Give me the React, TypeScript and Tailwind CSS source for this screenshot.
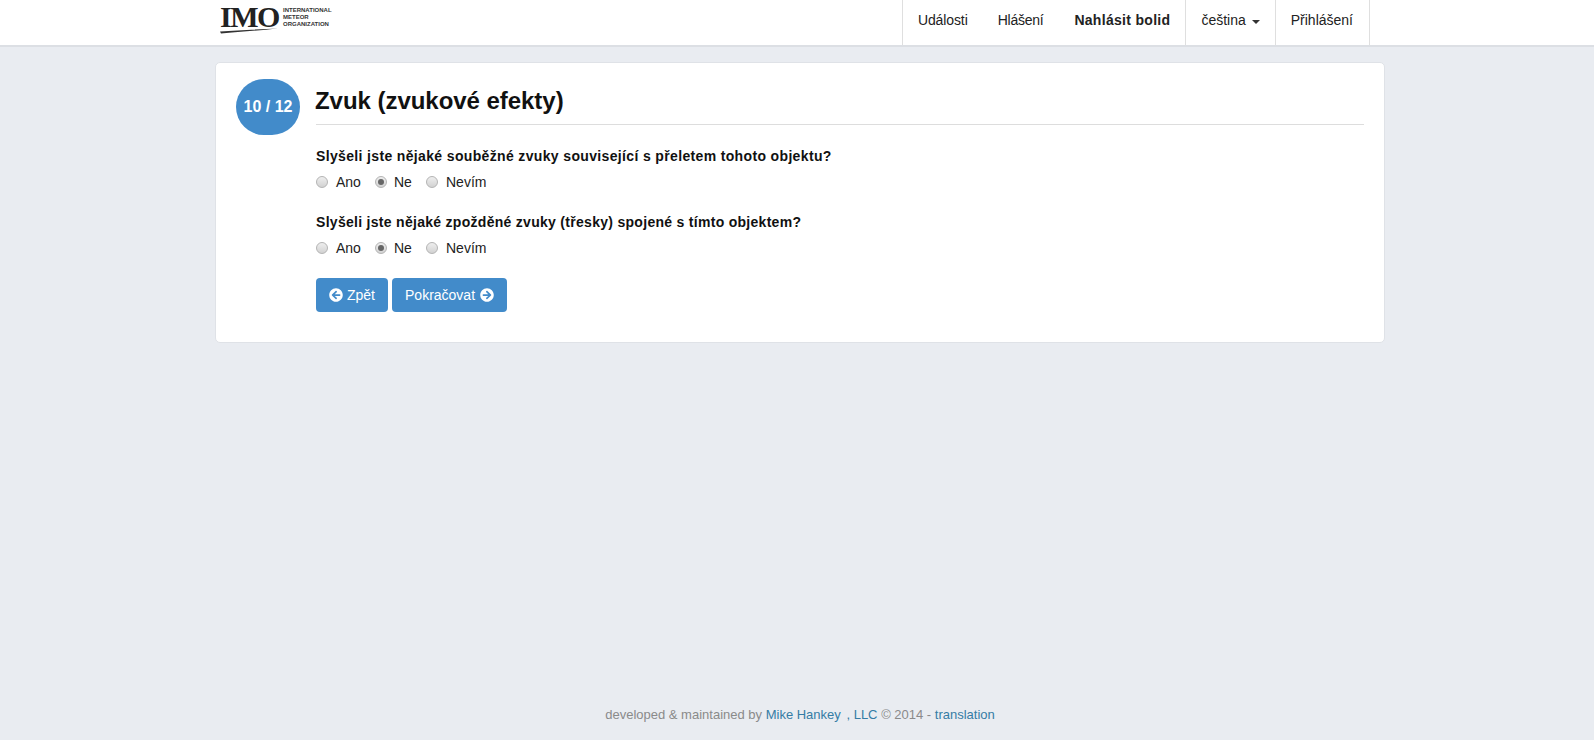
import { FaArrowCircleLeft, FaArrowCircleRight } from "react-icons/fa";

const font = "font-['Liberation_Sans',Arial,sans-serif]";

function Radio({ label, checked }: { label: string; checked?: boolean }) {
  return (
    <label className="flex items-center">
      <span className="flex h-[12px] w-[12px] items-center justify-center rounded-full border border-[#b4b4b4] bg-[linear-gradient(#eeeeee,#d2d2d2)]">
        {checked ? <span className="h-[6px] w-[6px] rounded-full bg-[#666666]" /> : null}
      </span>
      <span className={checked ? "ml-[7px]" : "ml-[8px]"}>{label}</span>
    </label>
  );
}

function Question({ title, tight }: { title: string; tight?: boolean }) {
  return (
    <div className="mb-[21px]">
      <p className={`text-[14px] leading-[18px] font-bold text-[#111111] ${tight ? "tracking-[0.29px]" : "tracking-[0.35px]"}`}>{title}</p>
      <div className="mt-[7px] flex h-[20px] items-center text-[14px] text-[#222222]">
        <div className="w-[59px]"><Radio label="Ano" /></div>
        <div className="w-[51px]"><Radio label="Ne" checked /></div>
        <Radio label="Nevím" />
      </div>
    </div>
  );
}

export default function App() {
  return (
    <div className={`flex h-[740px] flex-col bg-[#e9ecf1] ${font} text-[14px]`}>
      <header className="h-[47px] shrink-0 border-b-2 border-[#dcdfe4] bg-white">
        <div className="mx-auto flex h-[45px] w-[1170px] items-start justify-between pr-[12px] pl-[8px]">
          <div className="flex h-[34px] items-center">
            <div className="relative mr-[5px] h-[34px] w-[58px]">
              <span className="block -translate-y-[1px] font-['Liberation_Serif',serif] text-[30px] leading-[36px] font-bold tracking-[-1.5px] text-[#222222]">IMO</span>
              <svg className="absolute top-[27px] left-0 h-[7px] w-[58px]" viewBox="0 0 58 7">
                <path d="M0 4.5 C 18 3.5 40 2 58 1.5 C 40 3.5 18 5 1 6.5 Z" fill="#333333" />
              </svg>
            </div>
            <div className="text-[6px] leading-[7px] font-bold text-[#333333]">
              <div>INTERNATIONAL</div>
              <div>METEOR</div>
              <div>ORGANIZATION</div>
            </div>
          </div>
          <nav className="flex h-[45px] items-stretch border-x border-[#dfdfdf] text-[#222222]">
            <a className="flex items-center px-[15px] pb-[4px] tracking-[-0.1px]">Události</a>
            <a className="flex items-center px-[15px] pb-[4px] tracking-[-0.25px]">Hlášení</a>
            <a className="flex items-center pr-[15px] pb-[4px] pl-[16px] font-bold tracking-[0.3px]">Nahlásit bolid</a>
            <a className="flex items-center gap-[6px] border-l border-[#dfdfdf] px-[15px] pb-[4px]">
              čeština
              <span className="mt-[2px] h-0 w-0 border-x-[4px] border-t-[4px] border-x-transparent border-t-[#333333]" />
            </a>
            <a className="flex items-center border-l border-[#dfdfdf] pr-[16px] pb-[4px] pl-[15px]">Přihlášení</a>
          </nav>
        </div>
      </header>

      <main className="mx-auto mt-[15px] flex h-[281px] w-[1170px] translate-x-[3px] rounded-[5px] border border-[#dfe2e7] bg-white pt-[16px] pr-[20px] pl-[20px]">
        <div className="flex h-[56px] w-[64px] shrink-0 items-center justify-center rounded-[28px] bg-[#428bca] text-[16px] font-bold text-white">
          10 / 12
        </div>
        <div className="ml-[16px] flex-1">
          <h1 className="h-[46px] border-b border-[#dddddd] text-[24px] leading-[44px] font-bold tracking-[-0.04px] text-[#111111]">
            <span className="-ml-[1px] block">Zvuk (zvukové efekty)</span>
          </h1>
          <div className="mt-[22px]">
            <Question title="Slyšeli jste nějaké souběžné zvuky související s přeletem tohoto objektu?" />
            <Question title="Slyšeli jste nějaké zpožděné zvuky (třesky) spojené s tímto objektem?" tight />
          </div>
          <div className="mt-[-1px] flex gap-[4px] text-white">
            <button className="flex h-[34px] items-center gap-[4px] rounded-[4px] bg-[#428bca] px-[13px]">
              <FaArrowCircleLeft className="h-[14px] w-[14px]" />
              Zpět
            </button>
            <button className="flex h-[34px] items-center gap-[5px] rounded-[4px] bg-[#428bca] px-[13px]">
              Pokračovat
              <FaArrowCircleRight className="h-[14px] w-[14px]" />
            </button>
          </div>
        </div>
      </main>

      <footer className="mt-auto flex h-[34px] items-start justify-center pl-[6px] text-[13px] text-[#8a8a8a]">
        <p className="leading-[18px]">
          developed &amp; maintained by <a className="text-[#357ca5]">Mike Hankey</a> <a className="ml-[2px] text-[#357ca5]">, LLC</a> © 2014 - <a className="text-[#357ca5]">translation</a>
        </p>
      </footer>
    </div>
  );
}
